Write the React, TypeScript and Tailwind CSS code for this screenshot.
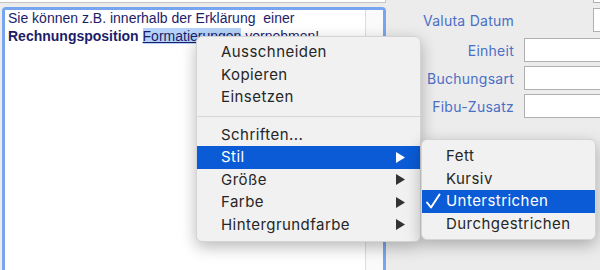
import React from 'react'

const menuFont = { fontFamily: 'Inter, "Noto Sans", sans-serif' }

const Arrow = ({ white }: { white?: boolean }) => (
  <svg width="9" height="11" viewBox="0 0 9 11">
    <polygon points="0,0 9,5.5 0,11" fill={white ? '#ffffff' : '#333333'} />
  </svg>
)

const Check = () => (
  <svg width="16" height="16" viewBox="0 0 16 16">
    <path d="M2 9.5 L6 14.5 L14.5 1.5" fill="none" stroke="#ffffff" strokeWidth="2" strokeLinecap="round" strokeLinejoin="round" />
  </svg>
)

const mainItems = [
  { label: 'Ausschneiden' },
  { label: 'Kopieren' },
  { label: 'Einsetzen' },
  { sep: true },
  { label: 'Schriften...' },
  { label: 'Stil', sub: true, active: true },
  { label: 'Größe', sub: true },
  { label: 'Farbe', sub: true },
  { label: 'Hintergrundfarbe', sub: true },
]

const styleItems = [
  { label: 'Fett' },
  { label: 'Kursiv' },
  { label: 'Unterstrichen', checked: true },
  { label: 'Durchgestrichen' },
]

const FormRow = ({ label, className }: { label: string; className?: string }) => (
  <div className={`flex items-center h-[24px] ${className ?? ''}`}>
    <span className="w-[128px] text-right text-[14px] tracking-[0.25px] text-[#4a6fc6]" style={menuFont}>
      {label}
    </span>
    <div className="ml-[10px] w-[80px] h-[24px] border border-[#b0b0b0] bg-white" />
  </div>
)

export default function App() {
  return (
    <div className="relative flex w-[600px] h-[270px] overflow-hidden bg-[#ececec]">
      {/* left: editor */}
      <div className="flex flex-col w-[390px]">
        <div className="w-[386px] h-[3px] border-b border-r border-[#c4c4c4] bg-white" />
        <div className="flex flex-1 ml-[2px] mt-[4px] border-[3px] border-b-0 border-[#78a6ee] rounded-t-[4px] bg-white">
          <div
            className="flex-1 pl-[3px] -mt-[1px] text-[14px] leading-[18px] text-[#1c1c6a]"
            style={{ fontFamily: '"Liberation Sans", Arial, sans-serif' }}
          >
            <div className="whitespace-pre">Sie können z.B. innerhalb der Erklärung  einer</div>
            <div className="whitespace-pre">
              <span className="font-bold">Rechnungsposition</span>{' '}
              <span className="underline bg-[#b5d3f8]">Formatierungen</span>
              <span className="underline"> vornehmen!</span>
            </div>
          </div>
          <div className="w-[18px] border-l border-[#dcdcdc] bg-[#fafafa]" />
        </div>
      </div>

      {/* right: form fields */}
      <div className="flex flex-col flex-1">
        <div className="ml-[207px] w-[10px] h-[3px] border-l border-b border-[#b0b0b0] bg-white" />
        <FormRow label="Valuta Datum" className="mt-[5px] [&>div]:ml-[79px]" />
        <FormRow label="Einheit" className="mt-[6px]" />
        <FormRow label="Buchungsart" className="mt-[4px]" />
        <FormRow label="Fibu-Zusatz" className="mt-[4px]" />
      </div>

      {/* context menu */}
      <div
        className="absolute left-[196px] top-[36px] w-[225px] pt-[4px] pb-[5px] rounded-[6px] bg-[#f1f1f1] border border-[#d4d4d4] shadow-[0_5px_16px_rgba(0,0,0,0.28)] text-[15px] tracking-[0.45px] text-[#262626]"
        style={menuFont}
      >
        {mainItems.map((it, i) =>
          it.sep ? (
            <div key={i} className="h-[15px] flex items-center">
              <div className="w-full h-px bg-[#d6d6d6]" />
            </div>
          ) : (
            <div
              key={i}
              className={`flex items-center justify-between h-[22.5px] pl-[24px] pr-[15px] ${
                it.active ? 'bg-[#0b5bd7] text-white' : ''
              }`}
            >
              <span>{it.label}</span>
              {it.sub && <Arrow white={it.active} />}
            </div>
          )
        )}
      </div>

      {/* style submenu */}
      <div
        className="absolute left-[421px] top-[139px] w-[175px] pt-[5px] pb-[4px] rounded-[6px] bg-[#f1f1f1] border border-[#d4d4d4] shadow-[0_5px_16px_rgba(0,0,0,0.28)] text-[15px] tracking-[0.45px] text-[#262626]"
        style={menuFont}
      >
        {styleItems.map((it, i) => (
          <div
            key={i}
            className={`flex items-center h-[22.5px] ${it.checked ? 'bg-[#0b5bd7] text-white' : ''}`}
          >
            <span className="flex items-center w-[24px] pl-[3px]">{it.checked && <Check />}</span>
            <span>{it.label}</span>
          </div>
        ))}
      </div>
    </div>
  )
}
